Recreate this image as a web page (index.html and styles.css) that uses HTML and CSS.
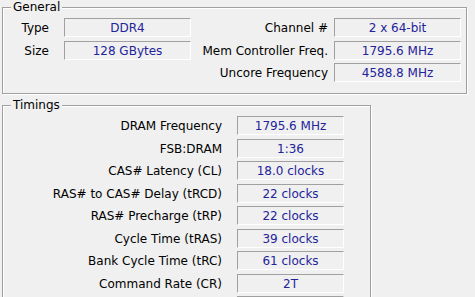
FILE: index.html
```html
<!DOCTYPE html>
<html lang="en">
<head>
<meta charset="UTF-8" />
<title>Memory</title>
<link rel="stylesheet" href="styles.css">
</head>
<body>
<div class="group general">
  <span class="legend">General</span>
  <div class="grid-general">
    <span class="label l1">Type</span>
    <span class="field">DDR4</span>
    <span class="label l2">Channel #</span>
    <span class="field">2 x 64-bit</span>

    <span class="label l1">Size</span>
    <span class="field">128 GBytes</span>
    <span class="label l2">Mem Controller Freq.</span>
    <span class="field">1795.6 MHz</span>

    <span class="label l1"></span>
    <span class="blank"></span>
    <span class="label l2">Uncore Frequency</span>
    <span class="field">4588.8 MHz</span>
  </div>
</div>

<div class="group timings">
  <span class="legend">Timings</span>
  <div class="grid-timings">
    <span class="label">DRAM Frequency</span><span class="field">1795.6 MHz</span>
    <span class="label">FSB:DRAM</span><span class="field">1:36</span>
    <span class="label">CAS# Latency (CL)</span><span class="field">18.0 clocks</span>
    <span class="label">RAS# to CAS# Delay (tRCD)</span><span class="field">22 clocks</span>
    <span class="label">RAS# Precharge (tRP)</span><span class="field">22 clocks</span>
    <span class="label">Cycle Time (tRAS)</span><span class="field">39 clocks</span>
    <span class="label">Bank Cycle Time (tRC)</span><span class="field">61 clocks</span>
    <span class="label">Command Rate (CR)</span><span class="field">2T</span>
    <span class="label"></span><span class="field"></span>
  </div>
</div>
</body>
</html>
```

FILE: styles.css
```css
html, body {
  margin: 0; padding: 0; background: #f0f0f0;
  font-family: Tahoma, "DejaVu Sans", sans-serif; font-size: 12px; color: #000;
  overflow: hidden;
}
body { padding-top: 7px; padding-left: 2px; height: 297px; box-sizing: border-box; }
.group {
  position: relative; border: 1px solid #a0a0a0;
  box-shadow: inset 1px 1px 0 #fff, 1px 1px 0 #fff;
}
.legend {
  position: absolute; top: -7px; left: 8px; padding: 0 2px;
  background: #f0f0f0; line-height: 13px;
}
.general { width: 463px; height: 85px; }
.timings { width: 367px; height: 300px; margin-top: 11px; }
.grid-general {
  display: grid; grid-template-columns: 61px 127px 143px 127px;
  grid-auto-rows: 19px; row-gap: 3.5px; padding-top: 10px;
}
.grid-timings {
  display: grid; grid-template-columns: 234px 107px;
  grid-auto-rows: 19px; row-gap: 3.5px; padding-top: 10px;
}
.label {
  text-align: right; padding-right: 15px; padding-top: 2px; line-height: 17px; white-space: nowrap;
}
.l2 { padding-right: 6px; }
.field {
  box-sizing: border-box; border: 1px solid #fff; border-top-color: #a0a0a0; border-left-color: #a0a0a0;
  text-align: center; padding-top: 1px; line-height: 16px; color: #23239b; white-space: nowrap;
}
```
